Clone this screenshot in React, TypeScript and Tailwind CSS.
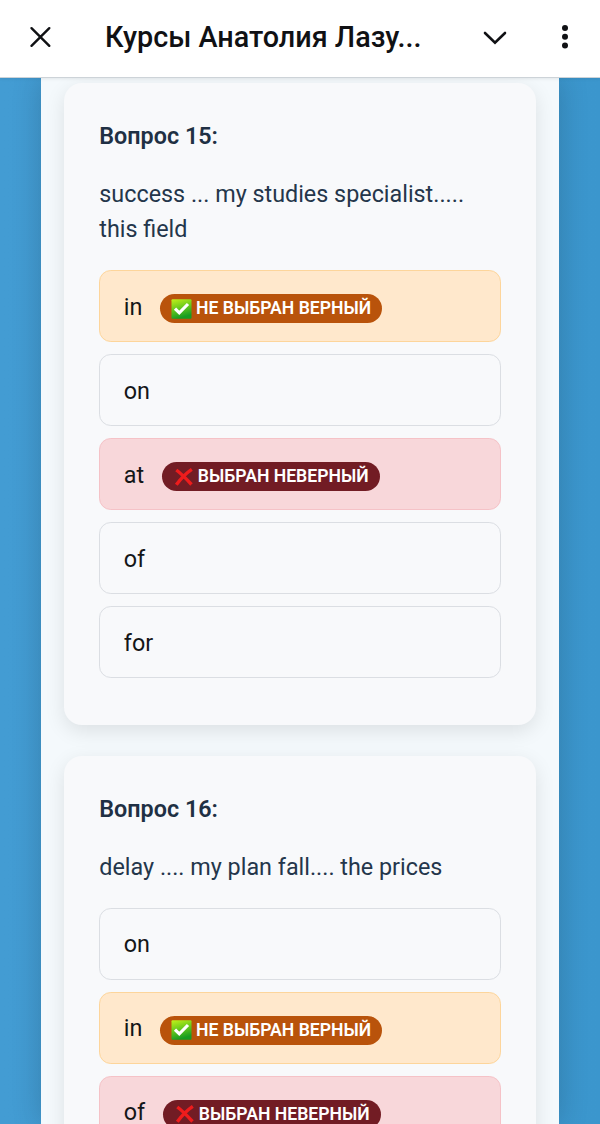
type Status = 'missed' | 'wrong'

type Option = { text: string; status?: Status }
type Question = { id: number; text: string; options: Option[] }

const questions: Question[] = [
  {
    id: 15,
    text: 'success ... my studies specialist..... this field',
    options: [
      { text: 'in', status: 'missed' },
      { text: 'on' },
      { text: 'at', status: 'wrong' },
      { text: 'of' },
      { text: 'for' },
    ],
  },
  {
    id: 16,
    text: 'delay .... my plan fall.... the prices',
    options: [
      { text: 'on' },
      { text: 'in', status: 'missed' },
      { text: 'of', status: 'wrong' },
    ],
  },
]

const optionStyles = {
  none: 'border-[#dbdee3]',
  missed: 'border-[#fdd59b] bg-[#ffe8cc]',
  wrong: 'border-[#f5c2c7] bg-[#f8d7da]',
}

function CheckMark() {
  return (
    <svg width="21" height="20" viewBox="0 0 21 20" className="mr-[4px] shrink-0">
      <defs>
        <linearGradient id="check-fill" x1="0" y1="0" x2="0.3" y2="1">
          <stop offset="0" stopColor="#c3f01a" />
          <stop offset="0.5" stopColor="#6ccb1c" />
          <stop offset="1" stopColor="#169c22" />
        </linearGradient>
      </defs>
      <rect x="0.5" y="0.3" width="20" height="19.4" rx="1" fill="url(#check-fill)" />
      <path d="M4 9.6l4.3 4.2L17 5" fill="none" stroke="#fff" strokeWidth="3.2" />
    </svg>
  )
}

function CrossMark() {
  return (
    <svg width="21" height="20" viewBox="0 0 21 20" className="mr-[4px] shrink-0">
      <path d="M3.3 3C8 6.5 13.2 11.7 18.5 17.5M18.8 2.3C12.5 6.5 7.5 12 3.3 17.7" fill="none" stroke="#ee1c1c" strokeWidth="3.4" />
    </svg>
  )
}

function Badge({ status }: { status: Status }) {
  return (
    <span
      className={`mt-[5px] ml-[17.6px] flex h-[29px] items-center rounded-full px-[11px] text-[17.6px] leading-[29px] font-semibold whitespace-nowrap text-white ${
        status === 'missed' ? 'bg-[#b9530b]' : 'bg-[#721c24]'
      }`}
    >
      {status === 'missed' ? <CheckMark /> : <CrossMark />}
      {status === 'missed' ? 'НЕ ВЫБРАН ВЕРНЫЙ' : 'ВЫБРАН НЕВЕРНЫЙ'}
    </span>
  )
}

function QuestionCard({ question }: { question: Question }) {
  return (
    <section className="mb-[30.7px] rounded-[18px] bg-[#f8f9fb] px-[35.3px] pt-[36px] pb-[46.7px] shadow-[0_6px_20px_rgba(0,0,0,0.1)]">
      <h2 className="mb-[23.4px] text-[23.35px] leading-[35px] font-semibold text-[#1f3044]">Вопрос {question.id}:</h2>
      <p className="mb-[22.5px] text-[23.35px] leading-[35px] text-[#24364b]">{question.text}</p>
      <ul className="flex flex-col gap-[12px]">
        {question.options.map((o, i) => (
          <li
            key={i}
            className={`flex h-[72.1px] items-center rounded-[11.8px] border px-[23.5px] text-[23.35px] leading-[35px] text-[#141618] ${optionStyles[o.status ?? 'none']}`}
          >
            <span className="pt-[2px]">{o.text}</span>
            {o.status && <Badge status={o.status} />}
          </li>
        ))}
      </ul>
    </section>
  )
}

function Header() {
  return (
    <header className="relative z-10 flex h-[78px] shrink-0 items-center border-b border-[#cdd3d8] bg-white pb-[3px] text-[#101114] shadow-[0_1px_3px_rgba(0,0,0,0.08)]">
      <svg width="22" height="22" viewBox="0 0 22 22" className="ml-[29px]" fill="none" stroke="currentColor" strokeWidth="2.4" strokeLinecap="round">
        <path d="M2.5 2.2l17.8 17.6M20.3 2.2L2.5 19.8" />
      </svg>
      <h1 className="ml-[54px] w-[330px] text-[28.75px] leading-[36px] font-medium whitespace-nowrap">Курсы Анатолия Лазу...</h1>
      <svg width="24" height="14" viewBox="0 0 24 14" className="mt-[2px] ml-[48px]" fill="none" stroke="currentColor" strokeWidth="2.6" strokeLinecap="round">
        <path d="M2 2l10 9.8L22 2" />
      </svg>
      <svg width="8" height="26" viewBox="0 0 8 26" className="ml-[54px]" fill="currentColor">
        <circle cx="4" cy="4" r="3" />
        <circle cx="4" cy="12.8" r="3" />
        <circle cx="4" cy="21.6" r="3" />
      </svg>
    </header>
  )
}

export default function App() {
  return (
    <div className="flex h-[1124px] w-[600px] flex-col overflow-hidden bg-linear-to-r from-[#439cd3] to-[#3b96cd] font-[Roboto,sans-serif]">
      <Header />
      <main className="mx-[41px] min-h-0 flex-1 bg-[#f4f9fc] px-[23px] pt-[5.1px] shadow-[0_0_28px_rgba(0,0,0,0.18)]">
        {questions.map(q => (
          <QuestionCard key={q.id} question={q} />
        ))}
      </main>
    </div>
  )
}
